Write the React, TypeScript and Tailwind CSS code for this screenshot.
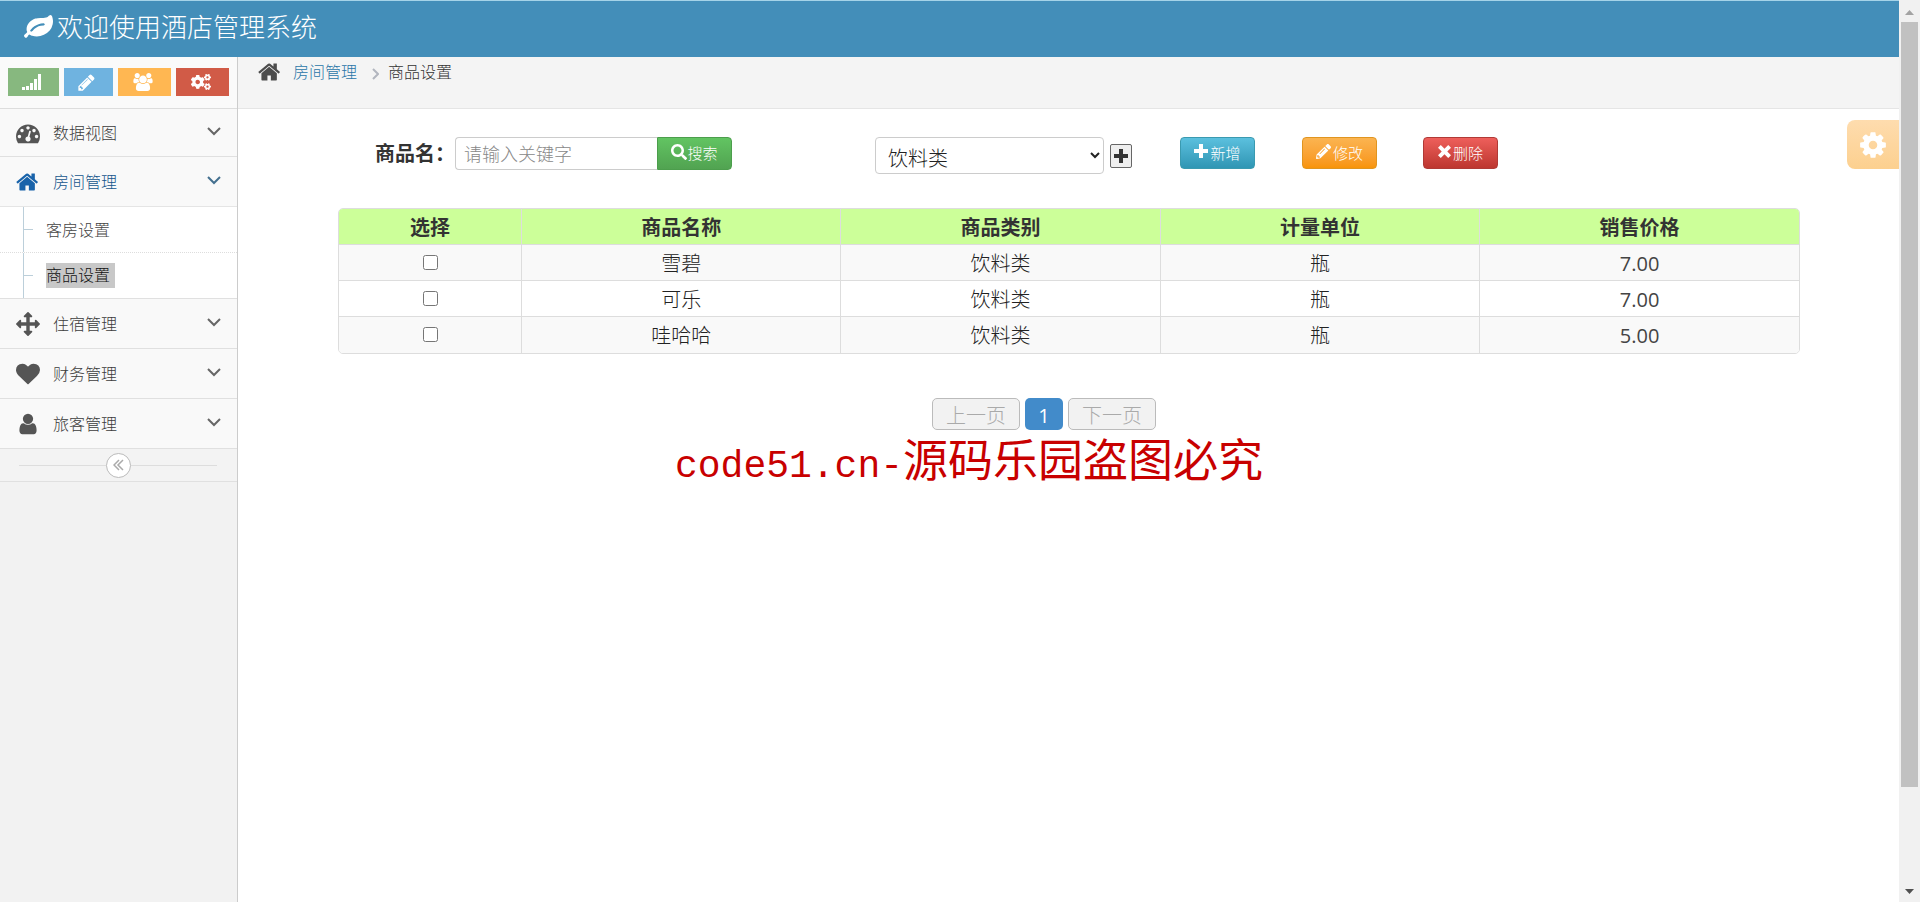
import { useState, type FC, type ReactNode } from 'react';
import { FaCogs, FaPencilAlt, FaSearch } from 'react-icons/fa';

interface GlyphProps {
  d: string;
  className: string;
  viewBox?: string;
}

const Glyph: FC<GlyphProps> = ({ d, className, viewBox = '0 0 1792 1792' }) => (
  <svg viewBox={viewBox} fill="currentColor" className={className} aria-hidden="true">
    <path d={d} />
  </svg>
);

const icons = {
  leaf: 'M1280 704q0-26-19-45t-45-19q-172 0-318 49.5t-259.5 134-235.5 219.5q-19 21-19 45 0 26 19 45t45 19q24 0 45-19 27-24 74-71t67-66q137-124 268.5-176t313.5-52q26 0 45-19t19-45zm512-198q0 95-20 193-46 224-184.5 383t-357.5 268q-214 108-438 108-148 0-286-47-15-5-88-42t-96-37q-16 0-39.5 32t-45 70-52.5 70-60 32q-43 0-63.5-17.5t-45.5-59.5q-2-4-6-11t-5.5-10-3-9.5-1.5-13.5q0-35 31-73.5t68-65.5 68-56 31-48q0-4-14-38t-16-44q-9-51-9-104 0-115 43.5-220t119-184.5 170.5-139 204-95.5q55-18 145-25.5t179.5-9 178.5-6 163.5-24 113.5-56.5l29.5-29.5 29.5-28 27-20 36.5-16 43.5-4.5q39 0 70.5 46t47.5 112 24 124 8 96z',
  home: 'M1408 992v480q0 26-19 45t-45 19h-384v-384h-256v384h-384q-26 0-45-19t-19-45v-480q0-1 .5-3t.5-3l575-474 575 474q1 2 1 6zm223-69l-62 74q-8 9-21 11h-3q-13 0-21-7l-692-577-692 577q-12 8-24 7-13-2-21-11l-62-74q-8-10-7-23.5t11-21.5l719-599q32-26 76-26t76 26l244 204v-195q0-14 9-23t23-9h192q14 0 23 9t9 23v408l219 182q10 8 11 21.5t-7 23.5z',
  dashboard: 'M384 1152q0-53-37.5-90.5t-90.5-37.5-90.5 37.5-37.5 90.5 37.5 90.5 90.5 37.5 90.5-37.5 37.5-90.5zm192-448q0-53-37.5-90.5t-90.5-37.5-90.5 37.5-37.5 90.5 37.5 90.5 90.5 37.5 90.5-37.5 37.5-90.5zm428 481l101-382q6-26-7.5-48.5t-38.5-29.5-48 6.5-30 39.5l-101 382q-60 5-107 43.5t-63 98.5q-20 77 20 146t117 89 146-20 89-117q16-60-6-117t-72-91zm660-33q0-53-37.5-90.5t-90.5-37.5-90.5 37.5-37.5 90.5 37.5 90.5 90.5 37.5 90.5-37.5 37.5-90.5zm-640-640q0-53-37.5-90.5t-90.5-37.5-90.5 37.5-37.5 90.5 37.5 90.5 90.5 37.5 90.5-37.5 37.5-90.5zm448 192q0-53-37.5-90.5t-90.5-37.5-90.5 37.5-37.5 90.5 37.5 90.5 90.5 37.5 90.5-37.5 37.5-90.5zm320 448q0 261-141 483-19 29-54 29h-1402q-35 0-54-29-141-221-141-483 0-182 71-348t191-286 286-191 348-71 348 71 286 191 191 286 71 348z',
  arrows: 'M1792 896q0 26-19 45l-256 256q-19 19-45 19t-45-19-19-45v-128h-384v384h128q26 0 45 19t19 45-19 45l-256 256q-19 19-45 19t-45-19l-256-256q-19-19-19-45t19-45 45-19h128v-384h-384v128q0 26-19 45t-45 19-45-19l-256-256q-19-19-19-45t19-45l256-256q19-19 45-19t45 19 19 45v128h384v-384h-128q-26 0-45-19t-19-45 19-45l256-256q19-19 45-19t45 19l256 256q19 19 19 45t-19 45-45 19h-128v384h384v-128q0-26 19-45t45-19 45 19l256 256q19 19 19 45z',
  heart: 'M896 1664q-26 0-44-18l-624-602q-10-8-27.5-26t-55.5-65.5-68-97.5-53.5-121-23.5-138q0-220 127-344t351-124q62 0 126.5 21.5t120 58 95.5 68.5 76 68q36-36 76-68t95.5-68.5 120-58 126.5-21.5q224 0 351 124t127 344q0 221-229 450l-623 600q-18 18-44 18z',
  user: 'M1536 1399q0 109-62.5 187t-150.5 78h-854q-88 0-150.5-78t-62.5-187q0-85 8.5-160.5t31.5-152 58.5-131 94-89 134.5-34.5q131 128 313 128t313-128q76 0 134.5 34.5t94 89 58.5 131 31.5 152 8.5 160.5zm-256-887q0 159-112.5 271.5t-271.5 112.5-271.5-112.5-112.5-271.5 112.5-271.5 271.5-112.5 271.5 112.5 112.5 271.5z',
  users: 'M593 896q-162 5-265 128h-134q-82 0-138-40.5t-56-118.5q0-353 124-353 6 0 43.5 21t97.5 42.5 119 21.5q67 0 133-23-5 37-5 66 0 139 81 256zm1071 637q0 120-73 189.5t-194 69.5h-874q-121 0-194-69.5t-73-189.5q0-53 3.5-103.5t14-109 26.5-108.5 43-97.5 62-81 85.5-53.5 111.5-20q10 0 43 21.5t73 48 107 48 135 21.5 135-21.5 107-48 73-48 43-21.5q61 0 111.5 20t85.5 53.5 62 81 43 97.5 26.5 108.5 14 109 3.5 103.5zm-1024-1277q0 106-75 181t-181 75-181-75-75-181 75-181 181-75 181 75 75 181zm704 384q0 159-112.5 271.5t-271.5 112.5-271.5-112.5-112.5-271.5 112.5-271.5 271.5-112.5 271.5 112.5 112.5 271.5zm576 225q0 78-56 118.5t-138 40.5h-134q-103-123-265-128 81-117 81-256 0-29-5-66 66 23 133 23 59 0 119-21.5t97.5-42.5 43.5-21q124 0 124 353zm-128-609q0 106-75 181t-181 75-181-75-75-181 75-181 181-75 181 75 75 181z',
  pencil: 'M491 1536l91-91-235-235-91 91v107h128v128h107zm523-928q0-22-22-22-10 0-17 7l-542 542q-7 7-7 17 0 22 22 22 10 0 17-7l542-542q7-7 7-17zm-54-192l416 416-832 832h-416v-416zm683 96q0 53-37 90l-166 166-416-416 166-165q36-38 90-38 53 0 91 38l235 234q37 39 37 91z',
  cog: 'M1152 896q0-106-75-181t-181-75-181 75-75 181 75 181 181 75 181-75 75-181zm512-109v222q0 12-8 23t-20 13l-185 28q-19 54-39 91 35 50 107 138 10 12 10 25t-9 23q-27 37-99 108t-94 71q-12 0-26-9l-138-108q-44 23-91 38-16 136-29 186-7 28-36 28h-222q-14 0-24.5-8.5t-11.5-21.5l-28-184q-49-16-90-37l-141 107q-10 9-25 9-14 0-25-11-126-114-165-168-7-10-7-23 0-12 8-23 15-21 51-66.5t54-70.5q-27-50-41-99l-183-27q-13-2-21-12.5t-8-23.5v-222q0-12 8-23t19-13l186-28q14-46 39-92-40-57-107-138-10-12-10-24 0-10 9-23 26-36 98.5-107.5t94.5-71.5q13 0 26 10l138 107q44-23 91-38 16-136 29-186 7-28 36-28h222q14 0 24.5 8.5t11.5 21.5l28 184q49 16 90 37l142-107q9-9 24-9 13 0 25 10 129 119 165 170 7 8 7 22 0 12-8 23-15 21-51 66.5t-54 70.5q26 50 41 98l183 28q13 2 21 12.5t8 23.5z',
  signal: 'M0 13h3v3H0zM4 12h3v4H4zM8 9h3v7H8zM12 5h3v11h-3zM16 0h3v16h-3z',
  plus: 'M5 0h4v5h5v4H9v5H5V9H0V5h5z',
  remove: 'M3 0l4 4 4-4 3 3-4 4 4 4-3 3-4-4-4 4-3-3 4-4-4-4z',
};

const ChevronDown: FC<{ className: string }> = ({ className }) => (
  <svg viewBox="0 0 14 9" fill="none" stroke="currentColor" strokeWidth="2" className={className} aria-hidden="true">
    <path d="M1 1l6 6 6-6" />
  </svg>
);

interface Product {
  id: number;
  name: string;
  category: string;
  unit: string;
  price: string;
}

const products: Product[] = [
  { id: 1, name: '雪碧', category: '饮料类', unit: '瓶', price: '7.00' },
  { id: 2, name: '可乐', category: '饮料类', unit: '瓶', price: '7.00' },
  { id: 3, name: '哇哈哈', category: '饮料类', unit: '瓶', price: '5.00' },
];

const menu = [
  { label: '数据视图', icon: icons.dashboard },
  { label: '房间管理', icon: icons.home, children: ['客房设置', '商品设置'] },
  { label: '住宿管理', icon: icons.arrows },
  { label: '财务管理', icon: icons.heart },
  { label: '旅客管理', icon: icons.user },
];

const Sidebar: FC = () => (
  <aside className="w-[238px] shrink-0 border-r border-[#ccc] bg-[#f2f2f2]">
    <div className="flex h-[52px] items-start gap-[5px] border-b border-[#ddd] bg-[#fafafa] px-2 pt-[11px] text-white">
      <button aria-label="统计" className="flex h-7 w-[51px] items-center justify-center bg-[#87b87f] pr-1">
        <Glyph d={icons.signal} viewBox="0 0 19 16" className="h-4 w-[19px]" />
      </button>
      <button aria-label="编辑" className="flex h-7 w-[49px] items-center justify-center bg-[#6fb3e0] pr-1">
        <Glyph d={icons.pencil} className="size-[19px]" />
      </button>
      <button aria-label="用户" className="flex h-7 w-[53px] items-center justify-center bg-[#ffb752] pr-1">
        <Glyph d={icons.users} viewBox="0 0 1920 1792" className="h-[18px] w-5" />
      </button>
      <button aria-label="设置" className="flex h-7 w-[53px] items-center justify-center bg-[#d15b47] pr-1">
        <FaCogs className="size-5" />
      </button>
    </div>
    <ul>
      {menu.map((item) => (
        <li key={item.label} className="group">
          <a
            href="#"
            className={
              item.children
                ? 'flex h-[50px] items-center border-b border-[#e5e5e5] bg-[#f9f9f9] px-4 text-[#14568c]'
                : 'flex h-[50px] items-center border-b border-[#e0e0e0] bg-[#f9f9f9] px-4 text-[#3c3c3c] group-first:h-12'
            }
          >
            <Glyph d={item.icon} className={item.children ? 'size-6 text-[#1963aa]' : 'size-6 text-[#555]'} />
            <span className="ml-[13px] flex-1">{item.label}</span>
            <ChevronDown className={item.children ? 'mb-0.5 h-[9px] w-[14px] text-[#44708f]' : 'mb-0.5 h-[9px] w-[14px] text-[#666]'} />
          </a>
          {item.children && (
            <ul className="border-b border-[#e0e0e0] bg-white">
              {item.children.map((child, i) => (
                <li
                  key={child}
                  className={i === 0 ? 'flex h-[46px] border-b border-dotted border-[#ddd] pl-[23px]' : 'flex h-[45px] pl-[23px]'}
                >
                  <a href="#" className="flex flex-1 items-center border-l border-[#bccfda] text-[#444]">
                    <span className="h-px w-[9px] bg-[#bccfda]" />
                    <span className={i === 1 ? 'ml-[13px] bg-[#c8c8c8] pr-[5px] leading-[25px] text-[#111]' : 'ml-[13px]'}>
                      {child}
                    </span>
                  </a>
                </li>
              ))}
            </ul>
          )}
        </li>
      ))}
    </ul>
    <div className="flex h-[33px] items-center border-b border-[#e0e0e0] bg-[#f3f3f3] pr-5 pl-[19px]">
      <span className="h-px flex-1 bg-[#ddd]" />
      <button
        aria-label="收起菜单"
        className="flex size-[25px] items-center justify-center rounded-full border border-[#bbb] bg-white text-[#aaa]"
      >
        <svg viewBox="0 0 11 12" fill="none" stroke="currentColor" strokeWidth="1.5" className="h-3 w-[11px]">
          <path d="M6 1L1 6l5 5M10 1L5 6l5 5" />
        </svg>
      </button>
      <span className="h-px flex-1 bg-[#ddd]" />
    </div>
  </aside>
);

const ActionButton: FC<{ className: string; children: ReactNode }> = ({ className, children }) => (
  <div>
    <button className={`flex h-8 w-[75px] items-center justify-center rounded border text-[15px] font-light text-white ${className}`}>
      {children}
    </button>
  </div>
);

const Toolbar: FC = () => (
  <div className="grid grid-cols-[500fr_305fr_122fr_121fr_377fr] items-start pl-[37px]">
    <div className="flex items-center">
      <label htmlFor="keyword" className="w-20 text-xl leading-[33px] font-bold whitespace-nowrap text-[#333]">
        商品名：
      </label>
      <input
        id="keyword"
        placeholder="请输入关键字"
        className="h-[33px] w-[202px] rounded-l border border-r-0 border-[#ccc] bg-white px-2 text-lg font-light outline-none placeholder:text-[#888]"
      />
      <button className="flex h-[33px] w-[75px] items-center justify-center rounded-r border border-[#4c9e4c] bg-linear-to-b from-[#62c462] to-[#51a351] text-[15px] font-light text-white">
        <FaSearch className="mb-1 size-4" />
        搜索
      </button>
    </div>
    <div className="flex items-center gap-[6px]">
      <select
        aria-label="商品类别"
        className="h-[37px] w-[229px] rounded border border-[#ccc] bg-white px-2 pt-[6px] text-xl font-light text-[#222]"
      >
        <option>饮料类</option>
      </select>
      <button
        aria-label="添加类别"
        className="flex h-6 w-[22px] items-center justify-center rounded-xs border border-[#666] bg-[#efefef] text-[#333]"
      >
        <Glyph d={icons.plus} viewBox="0 0 14 14" className="size-[14px]" />
      </button>
    </div>
    <ActionButton className="border-[#3a9ab0] bg-linear-to-b from-[#5bc0de] to-[#2f96b4]">
      <Glyph d={icons.plus} viewBox="0 0 14 14" className="mr-0.5 mb-1 size-[14px]" />
      新增
    </ActionButton>
    <ActionButton className="border-[#e09520] bg-linear-to-b from-[#fbb450] to-[#f89406]">
      <FaPencilAlt className="mr-0.5 mb-1 size-[15px]" />
      修改
    </ActionButton>
    <ActionButton className="border-[#b03a36] bg-linear-to-b from-[#ee5f5b] to-[#bd362f]">
      <Glyph d={icons.remove} viewBox="0 0 14 14" className="mr-0.5 mb-1 size-[13px]" />
      删除
    </ActionButton>
  </div>
);

const ProductTable: FC = () => {
  const [selected, setSelected] = useState<number[]>([]);

  const toggle = (id: number) => {
    setSelected(selected.includes(id) ? selected.filter((s) => s !== id) : [...selected, id]);
  };

  return (
    <div className="mt-[38px] overflow-hidden rounded-[5px] border border-[#ddd] [.grid+&]:mt-[34px]">
      <table className="w-full table-fixed text-center text-xl leading-8 text-[#222]">
        <thead>
          <tr className="bg-[#ccff99] text-[#333] *:border-b *:border-[#ddd] *:pt-[3px] *:font-bold">
            <th className="w-[12.5%] border-r">选择</th>
            <th className="border-r">商品名称</th>
            <th className="border-r">商品类别</th>
            <th className="border-r">计量单位</th>
            <th>销售价格</th>
          </tr>
        </thead>
        <tbody className="font-light">
          {products.map((p) => (
            <tr key={p.id} className="h-9 odd:bg-[#f9f9f9] *:border-[#ddd] *:pt-[3px] [&:not(:last-child)>td]:border-b">
              <td className="border-r">
                <input
                  type="checkbox"
                  aria-label={p.name}
                  checked={selected.includes(p.id)}
                  onChange={() => toggle(p.id)}
                  className="mx-auto mb-1 block size-[15px]"
                />
              </td>
              <td className="border-r">{p.name}</td>
              <td className="border-r">{p.category}</td>
              <td className="border-r">{p.unit}</td>
              <td className="font-normal text-[#444]">{p.price}</td>
            </tr>
          ))}
        </tbody>
      </table>
    </div>
  );
};

const Pager: FC = () => (
  <nav className="mt-11 flex justify-center gap-[5px] pr-[50px] text-xl font-light">
    <button disabled className="h-8 w-[88px] rounded-[5px] border border-[#bbb] bg-[#f2f2f2] pt-1 leading-6 text-[#aaa]">
      上一页
    </button>
    <button className="h-8 w-[38px] rounded-[5px] bg-[#428bca] pt-1 leading-6 font-normal text-white">1</button>
    <button disabled className="h-8 w-[88px] rounded-[5px] border border-[#bbb] bg-[#f2f2f2] pt-1 leading-6 text-[#aaa]">
      下一页
    </button>
  </nav>
);

const ScrollTrack: FC = () => (
  <div className="sticky top-0 flex h-screen w-[21px] shrink-0 flex-col items-center bg-[#f1f1f1]" aria-hidden="true">
    <svg viewBox="0 0 9 5" className="mt-[10px] mb-[7px] h-[5px] w-[9px] shrink-0 fill-[#a3a3a3]">
      <path d="M0 5L4.5 0 9 5z" />
    </svg>
    <div className="flex w-full flex-1 flex-col px-0.5">
      <div className="h-[89%] bg-[#c1c1c1]" />
    </div>
    <svg viewBox="0 0 9 5" className="mt-[7px] mb-2 h-[5px] w-[9px] shrink-0 fill-[#505050]">
      <path d="M0 0h9L4.5 5z" />
    </svg>
  </div>
);

const App: FC = () => (
  <div className="relative flex min-h-screen bg-white font-['Open_Sans','Noto_Sans_CJK_SC',sans-serif] text-base font-light">
    <div className="flex min-w-0 flex-1 flex-col">
      <header className="flex h-[57px] items-center border-t border-[#a5d3e8] bg-[#438eb9] pb-1 pl-6 text-white">
        <Glyph d={icons.leaf} className="size-[29px]" />
        <h1 className="ml-1 text-[26px] leading-8 font-light">欢迎使用酒店管理系统</h1>
      </header>
      <div className="flex flex-1">
        <Sidebar />
        <main className="relative min-w-0 flex-1">
          <nav className="flex h-[52px] items-start border-b border-[#e5e5e5] bg-[#f4f4f4] pt-[3px] pl-5 leading-6">
            <Glyph d={icons.home} className="size-6 text-[#4c4c4c]" />
            <a href="#" className="ml-[11px] text-[#2a76a8]">
              房间管理
            </a>
            <svg viewBox="0 0 7 12" fill="none" stroke="#b2b6bf" strokeWidth="2" className="mr-[9px] ml-[15px] mt-2 h-3 w-[7px]">
              <path d="M1 1l5 5-5 5" />
            </svg>
            <span className="text-[#333]">商品设置</span>
          </nav>
          <div className="pt-7 pr-[99px] pl-[100px]">
            <Toolbar />
            <ProductTable />
            <Pager />
          </div>
          <button
            aria-label="主题设置"
            className="absolute top-[63px] right-0 flex h-[49px] w-[52px] items-center justify-center rounded-l-lg bg-linear-to-b from-[#fedcae] to-[#fcd08f] text-white"
          >
            <Glyph d={icons.cog} className="size-[30px]" />
          </button>
        </main>
      </div>
    </div>
    <ScrollTrack />
    <p className="pointer-events-none absolute inset-x-0 top-[430px] pl-[18px] text-center text-[45px] leading-[60px] font-normal whitespace-nowrap text-[#c80000]">
      <span className="font-['Liberation_Mono',monospace] text-[38px]">code51.cn-</span>源码乐园盗图必究
    </p>
  </div>
);

export default App;
